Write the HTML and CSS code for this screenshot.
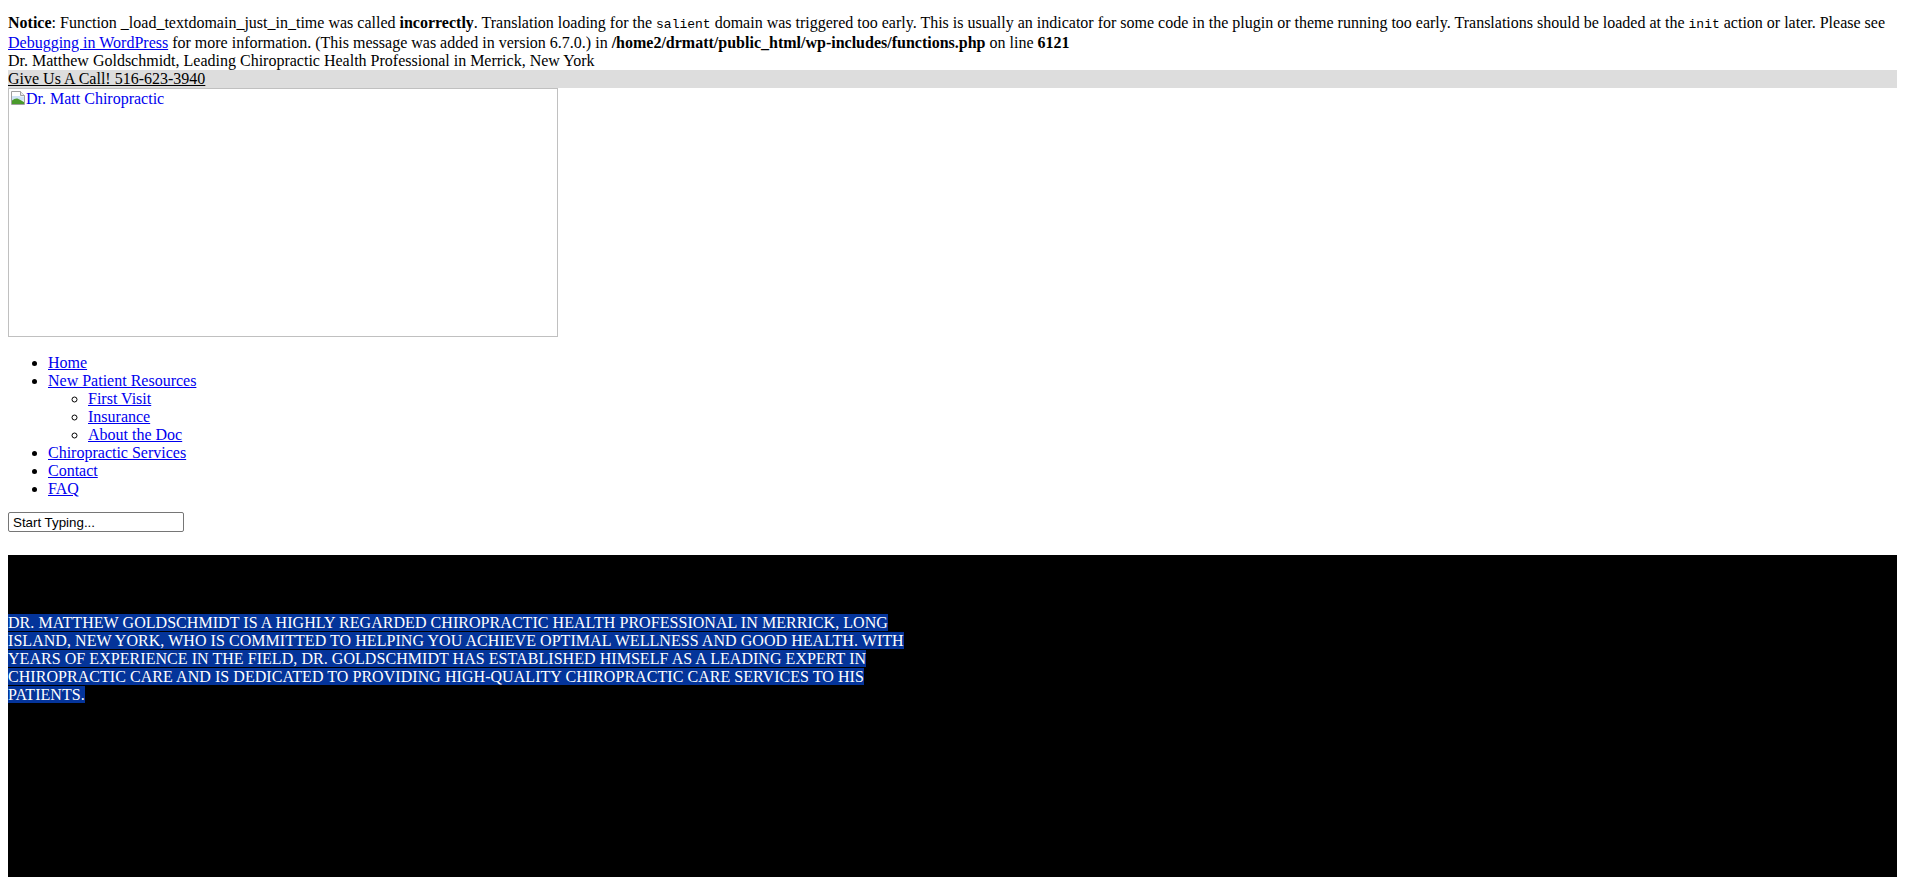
FILE: index.html
```html
<!DOCTYPE html>
<html lang="en">
<head>
    <meta charset="UTF-8">
    <meta name="viewport" content="width=device-width, initial-scale=1.0">
    <title>Dr. Matt Chiropractic</title>
    <link rel="stylesheet" href="styles.css">
</head>
<body>
    <div class="notice">
        <b>Notice</b>: Function _load_textdomain_just_in_time was called <b>incorrectly</b>. Translation loading for the <code>salient</code> domain was triggered too early. This is usually an indicator for some code in the plugin or theme running too early. Translations should be loaded at the <code>init</code> action or later. Please see <a href="#">Debugging in WordPress</a> for more information. (This message was added in version 6.7.0.) in <b>/home2/drmatt/public_html/wp-includes/functions.php</b> on line <b>6121</b>
    </div>
    <div class="tagline">Dr. Matthew Goldschmidt, Leading Chiropractic Health Professional in Merrick, New York</div>
    <div class="call-bar"><a href="#">Give Us A Call! 516-623-3940</a></div>

    <a href="#" class="logo">
        <span class="broken-img">
            <svg class="broken-icon" width="16" height="16" viewBox="0 0 16 16">
                <path d="M1.5 1.5h9l4 4v9h-13z" fill="#fff" stroke="#a0a0a0"/>
                <path d="M10.5 1.5v4h4" fill="#e8e8e8" stroke="#a0a0a0"/>
                <path d="M2 6h8v0.5l4 0v4H2z" fill="#cfe3f5"/>
                <path d="M2 14v-3.5c2-1.5 4-2.5 6-1.8l6 3.3V14z" fill="#4a9a2c"/>
            </svg><span class="alt-text">Dr. Matt Chiropractic</span>
        </span>
    </a>

    <ul class="menu">
        <li><a href="#">Home</a></li>
        <li><a href="#">New Patient Resources</a>
            <ul>
                <li><a href="#">First Visit</a></li>
                <li><a href="#">Insurance</a></li>
                <li><a href="#">About the Doc</a></li>
            </ul>
        </li>
        <li><a href="#">Chiropractic Services</a></li>
        <li><a href="#">Contact</a></li>
        <li><a href="#">FAQ</a></li>
    </ul>

    <form class="search-form">
        <input type="text" class="search-input" value="Start Typing...">
    </form>

    <div class="hero">
        <div class="hero-text">
            <span class="highlight">Dr. Matthew Goldschmidt is a highly regarded chiropractic health professional in Merrick, Long Island, New York, who is committed to helping you achieve optimal wellness and good health. With years of experience in the field, Dr. Goldschmidt has established himself as a leading expert in chiropractic care and is dedicated to providing high-quality chiropractic care services to his patients.</span>
        </div>
    </div>
</body>
</html>
```

FILE: styles.css
```css
body {
    margin: 8px;
    font-family: "Liberation Serif", "Times New Roman", serif;
    font-size: 16px;
    line-height: 18px;
    color: #000;
    background: #fff;
}
a {
    color: #0000ee;
}
code {
    font-family: "Liberation Mono", monospace;
    font-size: 13px;
}
.notice {
    padding-top: 6px;
}
.call-bar {
    background-color: #dddddd;
}
.call-bar a {
    color: #000;
}
.logo {
    display: block;
    width: 550px;
    text-decoration: none;
}
.broken-img {
    display: block;
    box-sizing: border-box;
    width: 550px;
    height: 249px;
    border: 1px solid #c0c0c0;
    padding: 1px;
}
.broken-icon {
    vertical-align: -2px;
}
.alt-text {
    color: #0000ee;
}
.menu {
    margin: 17px 0 14px;
    padding-left: 40px;
}
.menu ul {
    margin: 0;
    padding-left: 40px;
    list-style-type: circle;
}
.search-form {
    margin: 0 0 23px;
}
.search-input {
    display: block;
    box-sizing: border-box;
    width: 176px;
    height: 20px;
    margin: 0;
    padding: 1px 4px;
    font-family: "Liberation Sans", Arial, sans-serif;
    font-size: 13.33px;
    color: #000;
    border: 1px solid #767676;
    border-radius: 2px;
}
.hero {
    background: #000;
    min-height: 400px;
    padding-top: 59px;
}
.hero-text {
    max-width: 920px;
    color: #fff;
    text-transform: uppercase;
    letter-spacing: 0.05px;
}
.highlight {
    background: #04349a;
}
```
